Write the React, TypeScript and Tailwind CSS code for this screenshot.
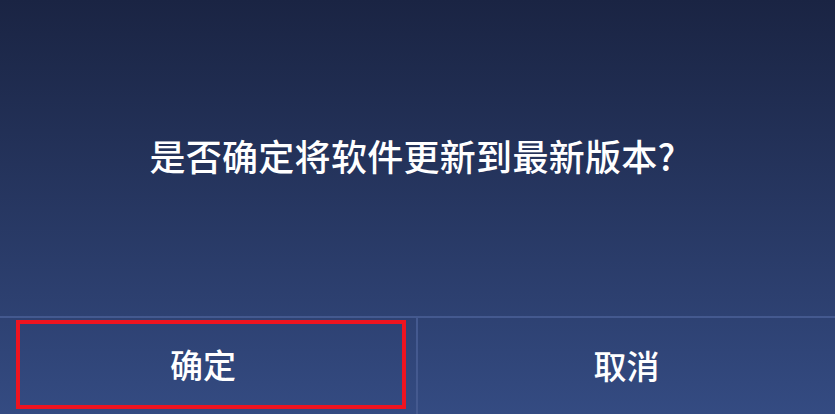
export default function App() {
  return (
    <div
      className="flex h-[414px] w-[835px] flex-col bg-gradient-to-b from-[#1a2443] to-[#344b82] text-white"
      style={{ fontFamily: '"Noto Sans CJK SC", "Noto Sans", sans-serif' }}
    >
      <div className="flex flex-1 items-center justify-center pb-[6px] pr-[10px]">
        <p className="text-[36px] font-medium tracking-[0.3px]">是否确定将软件更新到最新版本?</p>
      </div>
      <div className="flex h-[98px] border-t-2 border-[#44598f]">
        <div className="flex w-[416px] pb-[5px] pl-[16px] pr-[10px] pt-[2px]">
          <button className="flex flex-1 items-center justify-center border-4 border-[#ee1420] pr-[16px] text-[33px] font-medium">
            确定
          </button>
        </div>
        <div className="w-[2px] bg-[#44598f]" />
        <div className="flex flex-1 items-center justify-center">
          <button className="text-[33px] font-medium">取消</button>
        </div>
      </div>
    </div>
  );
}
